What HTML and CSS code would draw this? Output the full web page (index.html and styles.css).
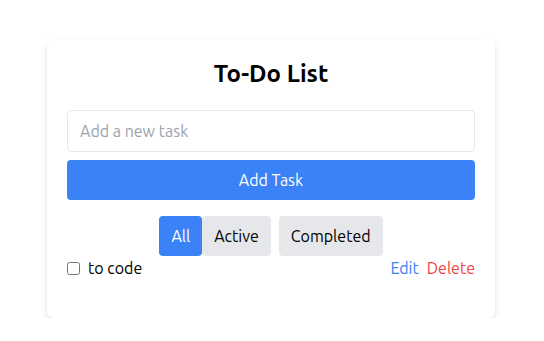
FILE: index.html
```html
<!DOCTYPE html>
<html lang="en">
  <head>
    <meta charset="UTF-8" />
    <meta name="viewport" content="width=device-width, initial-scale=1.0" />
    <title>To-Do List</title>
    <link rel="stylesheet" href="styles.css">
  </head>
  <body>
    <div class="todo-card">
      <h1 class="title">To-Do List</h1>

      <input class="task-input" type="text" placeholder="Add a new task" />
      <button class="add-btn">Add Task</button>

      <div class="filters">
        <button class="filter-btn active">All</button>
        <button class="filter-btn">Active</button>
        <button class="filter-btn spaced">Completed</button>
      </div>

      <ul class="task-list">
        <li class="task-item">
          <label class="task-label">
            <input type="checkbox" class="task-check" />
            <span>to code</span>
          </label>
          <div class="task-actions">
            <button class="link-btn edit">Edit</button>
            <button class="link-btn delete">Delete</button>
          </div>
        </li>
      </ul>
    </div>
  </body>
</html>
```

FILE: styles.css
```css
* {
  margin: 0;
  padding: 0;
  box-sizing: border-box;
}

body {
  font-family: "Ubuntu", "Open Sans", sans-serif;
  background: #ffffff;
  color: #000000;
  padding: 40px 2px 0 0;
}

.todo-card {
  width: 448px;
  margin: 0 auto;
  background: #ffffff;
  border-radius: 6px;
  padding: 20px;
  box-shadow: 0 4px 8px -1px rgba(0, 0, 0, 0.12), 0 2px 4px -2px rgba(0, 0, 0, 0.1);
}

.title {
  font-size: 24px;
  line-height: 28px;
  font-weight: bold;
  text-align: center;
  margin-bottom: 22px;
}

.task-input {
  display: block;
  width: 100%;
  height: 42px;
  padding: 8px 12px;
  font-family: inherit;
  font-size: 16px;
  border: 1px solid #e5e7eb;
  border-radius: 4px;
  outline: none;
  margin-bottom: 8px;
}

.task-input::placeholder {
  color: #9ca3af;
}

.add-btn {
  display: block;
  width: 100%;
  height: 40px;
  background: #3b82f6;
  color: #ffffff;
  font-family: inherit;
  font-size: 16px;
  border: none;
  border-radius: 4px;
  cursor: pointer;
}

.filters {
  display: flex;
  justify-content: center;
  margin-top: 16px;
}

.filter-btn {
  height: 40px;
  padding: 0 12px;
  background: #e5e7eb;
  color: #000000;
  font-family: inherit;
  font-size: 16px;
  border: none;
  border-radius: 4px;
  cursor: pointer;
}

.filter-btn.active {
  background: #3b82f6;
  color: #ffffff;
}

.filter-btn.spaced {
  margin-left: 8px;
}

.task-list {
  list-style: none;
  margin-bottom: 18px;
}

.task-item {
  display: flex;
  justify-content: space-between;
  align-items: center;
  height: 24px;
  font-size: 16px;
}

.task-label {
  display: flex;
  align-items: center;
  gap: 8px;
}

.task-check {
  width: 13px;
  height: 13px;
  margin: 0;
}

.task-actions {
  display: flex;
  gap: 8px;
}

.link-btn {
  background: none;
  border: none;
  font-family: inherit;
  font-size: 16px;
  cursor: pointer;
}

.link-btn.edit {
  color: #3b82f6;
}

.link-btn.delete {
  color: #ef4444;
}
```
